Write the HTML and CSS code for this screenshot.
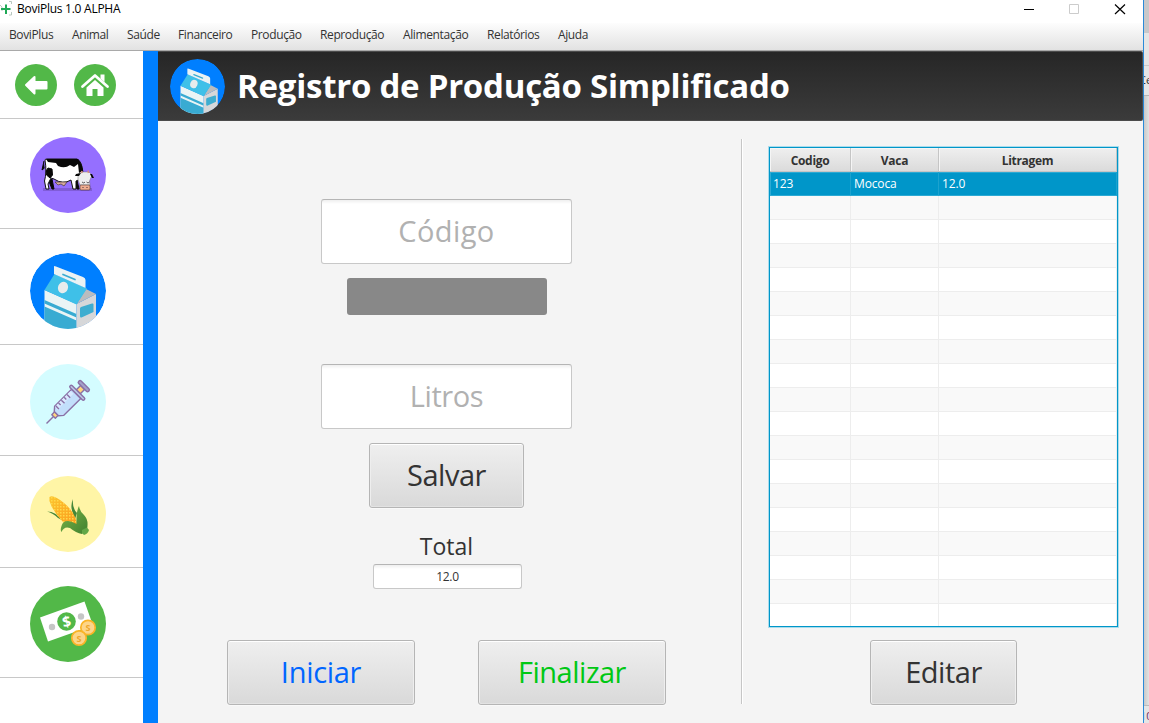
FILE: index.html
```html
<!DOCTYPE html>
<html lang="pt-BR">
<head>
<meta charset="utf-8">
<title>BoviPlus 1.0 ALPHA</title>
<link rel="stylesheet" href="styles.css">
</head>
<body>
<svg class="defs" width="0" height="0">
  <defs>
    <clipPath id="disc"><circle cx="38" cy="38" r="38"/></clipPath>
    <linearGradient id="husk" x1="0" y1="0" x2="1" y2="1"><stop offset="0" stop-color="#7db548"/><stop offset="1" stop-color="#3f8130"/></linearGradient>
    <linearGradient id="cob" x1="0" y1="0" x2="1" y2="1"><stop offset="0" stop-color="#fcc62f"/><stop offset="1" stop-color="#fb9a1c"/></linearGradient>
    <pattern id="grain" width="3" height="3" patternUnits="userSpaceOnUse"><rect x="0" y="0" width="1.500" height="1.500" fill="#ffd84a"/></pattern>
    <symbol id="milk" viewBox="0 0 76 76">
      <g clip-path="url(#disc)">
        <circle cx="38" cy="38" r="38" fill="#007fff"/>
        <path d="M14.500 37 46.500 51V76H14.500z" fill="#eaf4f5"/>
        <path d="M14.500 47 46.500 61V64.500L14.500 50.500zM14.500 53.500 46.500 67.500V76H14.500z" fill="#39abd2"/>
        <path d="M46.500 51 66 41V76H46.500z" fill="#d6d7d9"/>
        <path d="M56 36 66 41 46.500 51z" fill="#bbbcbf"/>
        <path d="M24.500 21 57 35.500 46.500 51.500 14.500 37z" fill="#3fc0e8"/>
        <path d="M24 13.500Q24 12.500 26 13.500L53 24Q55.500 25 55.500 27V35L24 21z" fill="#eaf2f4"/>
        <path d="M33 21.500 45 26.500" stroke="#39abd2" stroke-width="1.700" stroke-linecap="round"/>
        <ellipse cx="33" cy="34.500" rx="5" ry="5.800" fill="#e7ecec" transform="rotate(20 33 34.500)"/>
        <path d="M50 55.500Q50 54.700 51 54L62 50.500Q63.500 50 63.500 51.500V59L51.500 64.500Q50 65 50 63z" fill="#3eadd0"/>
      </g>
    </symbol>
  </defs>
</svg>
<div class="desktop">
  <div class="window">
    <header class="titlebar">
      <svg class="app-icon" width="13" height="16" viewBox="0 0 13 16"><path d="M0 5Q3 6 2 11M9 1.500H11.500V4M11.500 12V15H9" fill="none" stroke="#b9c8c0"/><path d="M6 4.500V14M1 9H10.500" stroke="#20a957" stroke-width="2"/></svg>
      <span class="app-name">BoviPlus 1.0 ALPHA</span>
      <svg class="controls" width="110" height="20" viewBox="0 0 110 20" fill="none"><path d="M1 9.500H11" stroke="#000"/><path d="M46.500 4.500H55.500V13.500H46.500z" stroke="#ccc"/><path d="M92 4.500 102 14M102 4.500 92 14" stroke="#000" stroke-width="1.200"/></svg>
    </header>
    <nav class="menubar">
      <span>BoviPlus</span><span>Animal</span><span>Saúde</span><span>Financeiro</span><span>Produção</span><span>Reprodução</span><span>Alimentação</span><span>Relatórios</span><span>Ajuda</span>
    </nav>
    <div class="body">
      <aside class="sidebar">
        <div class="nav-buttons">
          <svg width="42" height="42" viewBox="0 0 42 42"><circle cx="21" cy="21" r="21" fill="#52b848"/><path d="M11 21 19.500 13V18H31.500V24.500H19.500V29.500z" fill="#fff" stroke="#fff" stroke-width="2" stroke-linejoin="round"/></svg>
          <svg width="42" height="42" viewBox="0 0 42 42"><circle cx="21" cy="21" r="21" fill="#52b848"/><path d="M8.500 22.500 21 11.500 33.500 22.500" fill="none" stroke="#fff" stroke-width="2.800" stroke-linecap="round" stroke-linejoin="round"/><path d="M26.500 10.500H30.500V18L26.500 14.500zM12.500 23.500 21 16 29.500 23.500V32H23.500V25H18.500V32H12.500z" fill="#fff"/></svg>
        </div>
        <div class="module cow">
          <svg width="76" height="76" viewBox="0 0 76 76">
            <circle cx="38" cy="38" r="38" fill="#956fff"/>
            <path d="M13 51H62V54H13z" fill="#805cd8"/>
            <path d="M18 42 22 52H24L22 42M43 41 47 52H49L47 43" fill="#080808" stroke="#080808"/>
            <path d="M15 23Q15 22 17 22H47Q52 24 53 36L51 42 46 44V52H43L41 43Q33 48 24 42L21 41 18 47 19 52H16L14.500 44Q17 35 15 23z" fill="#fff" stroke="#111"/>
            <path d="M16 22H48Q52 26 53 34L49 36 48 27 44 30 40 28Q35 32 28 29L26 26 18 25z" fill="#080808"/>
            <path d="M14 24 12 33 14.500 31M16 34 18 31 22 32 22.500 38 20 41 16.500 38z" fill="#080808" stroke="#080808"/>
            <path d="M25 45H37L34 49 31 47 28 48z" fill="#d8aa9c" stroke="#473e3a" stroke-width=".7"/>
            <path d="M48 37 53 35H59L62 38 59.500 44 60 48H50L48 43z" fill="#eee" stroke="#777" stroke-width=".5"/>
            <path d="M60 37 62 37 64 41 62 41zM46 37 51 36 49 39 45 39z" fill="#080808"/>
            <path d="M52 34 51.500 36M58 33.500 58.500 36" stroke="#d88b7f" stroke-width="1.500"/>
            <path d="M52 45Q54 47 55 45M56.500 45Q58 47 59.500 45" fill="none" stroke="#333" stroke-width=".8"/>
            <rect x="50" y="48" width="10" height="5" rx="1" fill="#efad91" stroke="#493532" stroke-width=".6"/><path d="M53 50V51M57 50V51" stroke="#493532"/>
          </svg>
        </div>
        <div class="module milk"><svg width="76" height="76"><use href="#milk"/></svg></div>
        <div class="module syringe">
          <svg width="76" height="76" viewBox="0 0 76 76">
            <circle cx="38" cy="38" r="38" fill="#d4fcff"/>
            <g transform="translate(16.500 59.500) rotate(-45)" stroke="#8a70a6" stroke-width="1.400" stroke-linejoin="round">
              <path d="M0 0H11"/>
              <path d="M10 -2.500H14V2.500H10z" fill="#ffd57e"/>
              <path d="M14 -3 18 -6.500H42V6.500H18L14 3z" fill="#c2dffb"/>
              <path d="M18 -6H40V-2H17z" fill="#d9eaff" stroke="none"/>
              <path d="M19 -6V-1.500M23 -6V-3M27 -6V-1.500M31 -6V-3M35 -6V-1.500" fill="none"/>
              <path d="M45 -2.800H51V2.800H45z" fill="#ffd57e"/>
              <rect x="42" y="-10" width="3" height="20" rx="1.500" fill="#b9c9e5"/>
              <rect x="51" y="-7" width="3.500" height="14" rx="1.500" fill="#a3a0c9"/>
            </g>
          </svg>
        </div>
        <div class="module corn">
          <svg width="76" height="76" viewBox="0 0 76 76">
            <circle cx="38" cy="38" r="38" fill="#fff5a6"/>
            <path d="M17 35.500Q26 35.500 32 44L28 42Q23 37 17 35.500zM43 23Q39 31 45 43L47 37Q42 32 43 23z" fill="#45873a"/>
            <path d="M19.500 21Q23 18 34 27T47 48L40 50 34 47Q23 36 19.500 25z" fill="url(#cob)"/>
            <path d="M19.500 21Q23 18 34 27T47 48L40 50 34 47Q23 36 19.500 25z" fill="url(#grain)"/>
            <path d="M49 30Q46 36 46.500 48Q34 41 31.500 50Q30 54 31.500 56Q34 50 40 52Q46 57 52 58L57 53Q59 44 54 39Q50 36 49 30z" fill="url(#husk)"/>
            <path d="M52 54 57 51.500 59 54Q58 58 54 59L52 57z" fill="#63a747"/>
          </svg>
        </div>
        <div class="module money">
          <svg width="76" height="76" viewBox="0 0 76 76">
            <circle cx="38" cy="38" r="38" fill="#52b848"/>
            <path d="M10 31.500 54.500 15.500 63 39.500 18 55.500z" fill="#fff"/>
            <circle cx="22" cy="41" r="3.200" fill="#c5c5c5"/><circle cx="51" cy="30.500" r="3.200" fill="#c5c5c5"/>
            <circle cx="36.500" cy="35.500" r="9.300" fill="#52b848"/>
            <text class="bill" x="36.500" y="41" text-anchor="middle" transform="rotate(-12 36.500 35.500)">$</text>
            <g fill="#fdd58a" stroke="#fbb427" stroke-width="1.700"><circle cx="58" cy="41.500" r="7.200"/><circle cx="49" cy="52" r="7.200"/></g>
            <g class="coin" text-anchor="middle"><text x="58" y="45">S</text><text x="49" y="55.500">S</text></g>
          </svg>
        </div>
      </aside>
      <div class="stripe"></div>
      <main class="main">
        <div class="heading">
          <svg width="55" height="55" viewBox="0 0 76 76"><use href="#milk" width="76" height="76"/></svg>
          <h1>Registro de Produção Simplificado</h1>
        </div>
        <div class="content">
          <section class="form">
            <input class="field codigo" placeholder="Código">
            <div class="name-box"></div>
            <input class="field litros" placeholder="Litros">
            <button class="btn save">Salvar</button>
            <label class="total-label">Total</label>
            <input class="total" value="12.0">
            <div class="actions"><button class="btn start">Iniciar</button><button class="btn finish">Finalizar</button></div>
          </section>
          <div class="divider"></div>
          <section class="records">
            <div class="table">
              <div class="row head"><span>Codigo</span><span>Vaca</span><span>Litragem</span></div>
              <div class="row selected"><span>123</span><span>Mococa</span><span>12.0</span></div>
              <div class="row"><span></span><span></span><span></span></div><div class="row"><span></span><span></span><span></span></div>
              <div class="row"><span></span><span></span><span></span></div><div class="row"><span></span><span></span><span></span></div>
              <div class="row"><span></span><span></span><span></span></div><div class="row"><span></span><span></span><span></span></div>
              <div class="row"><span></span><span></span><span></span></div><div class="row"><span></span><span></span><span></span></div>
              <div class="row"><span></span><span></span><span></span></div><div class="row"><span></span><span></span><span></span></div>
              <div class="row"><span></span><span></span><span></span></div><div class="row"><span></span><span></span><span></span></div>
              <div class="row"><span></span><span></span><span></span></div><div class="row"><span></span><span></span><span></span></div>
              <div class="row"><span></span><span></span><span></span></div><div class="row"><span></span><span></span><span></span></div>
              <div class="row"><span></span><span></span><span></span></div><div class="row"><span></span><span></span><span></span></div>
            </div>
            <button class="btn edit">Editar</button>
          </section>
        </div>
      </main>
    </div>
  </div>
  <div class="behind"><div class="b-top"></div><div class="b-tab"></div><div class="b-text">Ce</div><div class="b-page"></div><div class="b-foot">10</div></div>
</div>
</body>
</html>
```

FILE: styles.css
```css
* { box-sizing: border-box; }
body { margin: 0; width: 1149px; height: 723px; overflow: hidden; font-family: "Open Sans", "Noto Sans", sans-serif; font-size: 12px; color: #333; background: #fff; }
.defs { position: absolute; }
svg { display: block; flex: none; }
.desktop { display: flex; height: 723px; }
.window { width: 1144px; height: 723px; border-right: 1px solid #2a8ad8; display: flex; flex-direction: column; background: #f4f4f4; }
.titlebar { height: 23px; background: #fff; display: flex; align-items: flex-start; }
.app-name { margin-left: 4px; line-height: 17px; color: #000; letter-spacing: -.26px; white-space: nowrap; }
.controls { margin-left: auto; margin-right: 10px; }
.menubar { height: 28px; padding-left: 9px; border-bottom: 1px solid #a9a9a9; background: linear-gradient(#fdfdfd, #e2e2e2); display: grid; grid-template-columns: 63px 55px 51px 73px 69px 83px 84px 71px 60px; line-height: 24px; letter-spacing: -.38px; white-space: nowrap; }
.body { display: flex; flex: 1; }
.sidebar { width: 143px; background: #fff; }
.nav-buttons { height: 68px; padding: 13px 0 0 15px; display: flex; gap: 17px; border-bottom: 1px solid #c8c8c8; }
.module { padding-left: 30px; border-bottom: 1px solid #c8c8c8; }
.cow { height: 110px; padding-top: 18px; }
.milk { height: 116px; padding-top: 24px; }
.syringe { height: 111px; padding-top: 19px; }
.corn { height: 112px; padding-top: 20px; }
.money { height: 110px; padding-top: 18px; }
.bill { font: bold 15px "Open Sans", sans-serif; fill: #fff; }
.coin { font: bold 9px "Open Sans", sans-serif; fill: #efa62b; }
.stripe { width: 15px; background: #007fff; }
.main { width: 985px; }
.heading { height: 70px; padding-left: 12px; display: flex; align-items: center; gap: 12px; background: linear-gradient(#262626, #3b3b3b); border: solid #4b4b4b; border-width: 1px 1px 1px 0; border-radius: 0 2px 2px 0; }
h1 { margin: 0; color: #fff; font-size: 33px; line-height: 44px; font-weight: 700; white-space: nowrap; letter-spacing: -.25px; }
.content { display: flex; height: 602px; }
.form { width: 577px; padding-top: 78px; display: flex; flex-direction: column; align-items: center; }
input, button { font-family: inherit; color: #333; padding: 0; text-align: center; display: block; }
.field, .total { border: 1px solid #c8c8c8; border-top-color: #b5b5b5; border-radius: 3px; background: linear-gradient(#efefef, #fff 4px); }
.field { width: 251px; height: 65px; font-size: 29px; padding-bottom: 2px; }
.codigo { letter-spacing: .4px; }
.litros { letter-spacing: -.4px; }
.field::placeholder { color: #b1b1b1; opacity: 1; }
.name-box { width: 200px; height: 37px; margin: 14px 0 49px 1px; border-radius: 3px; background: #888; }
.btn { height: 65px; font-size: 29px; line-height: 60px; letter-spacing: -.5px; padding-bottom: 2px; border: 1px solid #b5b5b5; border-radius: 3px; background: linear-gradient(#efefef, #d9d9d9); box-shadow: inset 0 1px #fff, inset 1px 0 #eee, inset -1px 0 #eee, inset 0 -1px #e2e2e2, 0 1px #f9f9f9; }
.save { width: 155px; margin-top: 14px; }
.total-label { margin-top: 21px; height: 35px; font-size: 23px; line-height: 34px; }
.total { width: 149px; height: 25px; margin-left: 2px; font-size: 12px; letter-spacing: -.3px; }
.actions { display: flex; gap: 63px; margin-top: 51px; }
.start, .finish { width: 188px; }
.start { color: #0066ff; letter-spacing: -.3px; }
.finish { color: #00c814; }
.divider { width: 2px; height: 565px; margin: 18px 0 0 6px; border-left: 1px solid #c6c6c6; border-right: 1px solid #fff; }
.records { margin: 26px 0 0 26px; width: 349px; }
.table { height: 480px; border: 1px solid #0096c9; box-shadow: 0 0 0 1px #a9dcec; background: #fff; overflow: hidden; }
.row { display: grid; grid-template-columns: 81px 88px 178px; height: 24px; line-height: 24px; letter-spacing: -.15px; }
.row span { height: 24px; border-right: 1px solid #ededed; border-bottom: 1px solid #ededed; padding-left: 3px; }
.row:nth-child(odd) { background: #f9f9f9; }
.row.head { background: linear-gradient(#efefef, #dadada); font-weight: 700; text-align: center; letter-spacing: -.3px; line-height: 26px; }
.row.head span { padding: 0; border-color: #c5c5c5; box-shadow: inset 1px 1px #f5f5f5; }
.row.selected { background: #0096c9; color: #fff; box-shadow: inset 0 0 0 1px #2caad4; }
.row.selected span { border-right-color: #1ca2ce; border-bottom-color: #2caad4; }
.edit { width: 147px; margin: 13px 0 0 101px; }
.behind { width: 5px; overflow: hidden; background: #e5e5e5; white-space: nowrap; }
.b-top { height: 33px; background: #c8c8ca; }
.b-tab { height: 33px; border-bottom: 1px solid #c9c9c9; }
.b-text { height: 30px; border-bottom: 1px solid #b5b5b5; line-height: 27px; text-indent: -5px; font-size: 11px; }
.b-page { height: 610px; background: linear-gradient(90deg, #c9c9c9, #e2e2e2); border-bottom: 1px solid #bbb; }
.b-foot { line-height: 20px; font-size: 11px; color: #743166; text-indent: -4px; }
```
